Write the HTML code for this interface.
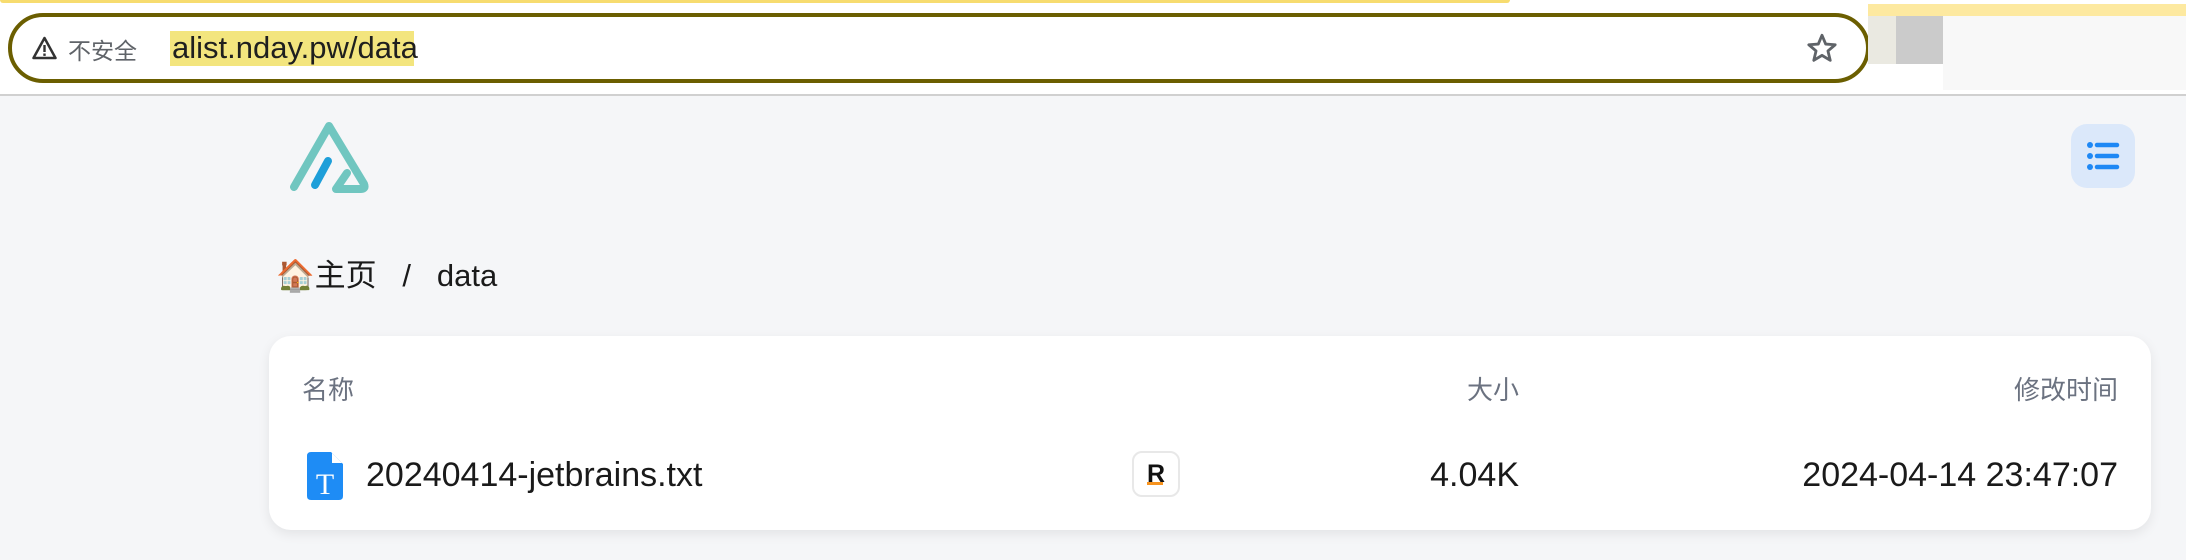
<!DOCTYPE html>
<html><head><meta charset="utf-8"><style>
*{margin:0;padding:0;box-sizing:border-box}
body{width:2186px;height:560px;overflow:hidden;background:#f5f6f8;font-family:"Liberation Sans","Noto Sans CJK SC",sans-serif;position:relative}
.top{position:absolute;left:0;top:0;width:2186px;height:95px;background:#fff}
.yl{position:absolute;left:0;top:0;width:1510px;height:3px;background:#f7dc6f;border-radius:0 0 3px 3px}
.bar{position:absolute;left:8px;top:13px;width:1862px;height:70px;border:4px solid #6b5e00;border-radius:36px;background:#fff}
.line{position:absolute;left:0;top:94px;width:2186px;height:2px;background:#d0d0d0}
.abs{position:absolute;white-space:nowrap}
</style></head><body>
<div class="top"></div>
<div class="yl"></div>
<div class="bar"></div>
<svg class="abs" style="left:31px;top:36px" width="27" height="24" viewBox="0 0 26 24"><path d="M13 2 L24 22 H2 Z" fill="none" stroke="#333" stroke-width="2.5" stroke-linejoin="round"/><rect x="11.8" y="9" width="2.4" height="7" fill="#333"/><rect x="11.8" y="17.5" width="2.4" height="2.4" fill="#333"/></svg>
<div class="abs" style="left:68px;top:32px;font-size:23px;color:#5f6368">不安全</div>
<div class="abs" style="left:170px;top:31px;height:35px;width:244px;background:#f3e57e"></div>
<div class="abs" style="left:172px;top:30px;font-size:31px;color:#1f1f1f">alist.nday.pw/data</div>
<svg class="abs" style="left:1805px;top:31px" width="34" height="34" viewBox="0 0 24 24"><path d="M12 3 L14.6 9.2 L21.3 9.7 L16.2 14.1 L17.8 20.7 L12 17.2 L6.2 20.7 L7.8 14.1 L2.7 9.7 L9.4 9.2 Z" fill="none" stroke="#5f6368" stroke-width="2" stroke-linejoin="round"/></svg>
<div class="abs" style="left:1868px;top:4px;width:318px;height:12px;background:#fde9a0"></div>
<div class="abs" style="left:1868px;top:16px;width:28px;height:48px;background:#eae9e1"></div>
<div class="abs" style="left:1896px;top:16px;width:47px;height:48px;background:#cbcbcb"></div>
<div class="abs" style="left:1943px;top:16px;width:243px;height:74px;background:#f8f8f8"></div>
<div class="line"></div>
<svg class="abs" style="left:289px;top:121px" width="80" height="72" viewBox="0 0 80 72"><path d="M5 66 L40 5 L75 63 Q77 68 72 68 L47 68 L58 52" fill="none" stroke="#70c6c0" stroke-width="8" stroke-linecap="round" stroke-linejoin="round"/><path d="M26 64 L39 40" stroke="#1e9fd9" stroke-width="8" stroke-linecap="round"/></svg>
<div class="abs" style="left:2071px;top:124px;width:64px;height:64px;border-radius:16px;background:#dbe8fa"></div>
<svg class="abs" style="left:2085px;top:138px" width="36" height="36" viewBox="0 0 36 36"><g fill="#1e88f5"><circle cx="5" cy="7" r="3"/><circle cx="5" cy="18" r="3"/><circle cx="5" cy="29" r="3"/></g><g stroke="#1e88f5" stroke-width="4.5" stroke-linecap="round"><path d="M12 7H32M12 18H32M12 29H32"/></g></svg>
<div class="abs" style="left:276px;top:250px;font-size:31px;color:#1a1a1a">🏠主页&nbsp;&nbsp;&nbsp;/&nbsp;&nbsp;&nbsp;data</div>
<div class="abs" style="left:269px;top:336px;width:1882px;height:194px;background:#fff;border-radius:22px;box-shadow:0 4px 12px rgba(0,0,0,.08)"></div>
<div class="abs" style="left:302px;top:370px;font-size:26px;color:#6b7280">名称</div>
<div class="abs" style="left:1419px;top:370px;width:100px;text-align:right;font-size:26px;color:#6b7280">大小</div>
<div class="abs" style="left:1918px;top:370px;width:200px;text-align:right;font-size:26px;color:#6b7280">修改时间</div>
<svg class="abs" style="left:307px;top:452px" width="36" height="48" viewBox="0 0 36 48"><path d="M4 0H24L36 12V44Q36 48 32 48H4Q0 48 0 44V4Q0 0 4 0Z" fill="#1e8cf5"/><path d="M25 1V11H35Z" fill="#fff"/><text x="18" y="42" text-anchor="middle" font-family="Liberation Serif,serif" font-size="30" fill="#fff">T</text></svg>
<div class="abs" style="left:366px;top:456px;font-size:34px;color:#1a1a1a">20240414-jetbrains.txt</div>
<div class="abs" style="left:1132px;top:451px;width:48px;height:46px;border:2px solid #e8e8e8;border-radius:10px;background:#fff"></div>
<div class="abs" style="left:1147px;top:460px;font-size:25px;font-weight:bold;color:#111">R</div>
<div class="abs" style="left:1147px;top:482px;width:16px;height:3px;background:#f7931e"></div>
<div class="abs" style="left:1319px;top:456px;width:200px;text-align:right;font-size:34px;color:#1a1a1a">4.04K</div>
<div class="abs" style="left:1618px;top:456px;width:500px;text-align:right;font-size:34px;color:#1a1a1a">2024-04-14 23:47:07</div>
</body></html>
